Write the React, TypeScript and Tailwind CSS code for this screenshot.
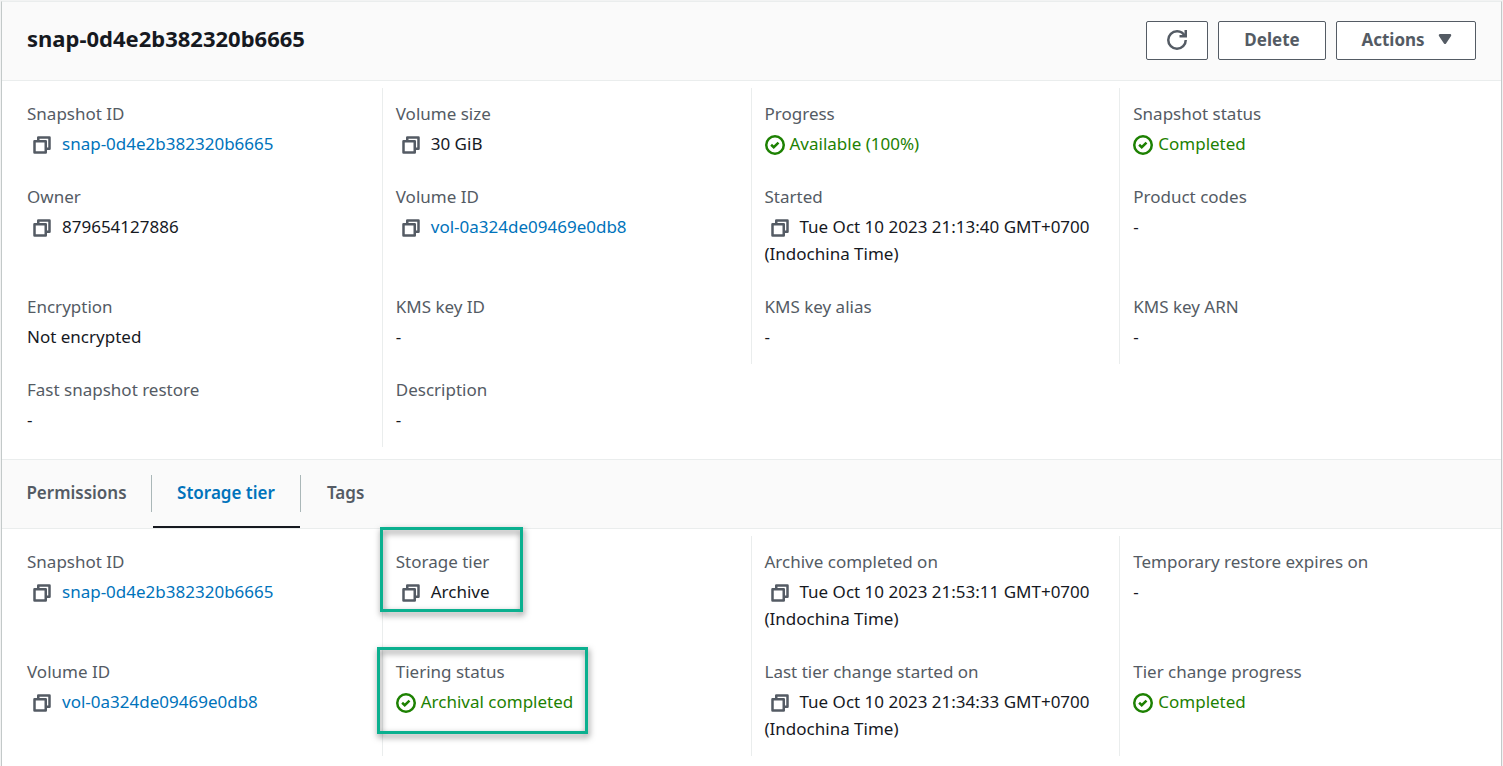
import React from "react";

type Kind = "text" | "link" | "status";

interface Field {
  label: string;
  value?: string;
  kind?: Kind;
  copy?: boolean;
  mark?: string;
}

const details: Field[] = [
  { label: "Snapshot ID", value: "snap-0d4e2b382320b6665", kind: "link", copy: true },
  { label: "Volume size", value: "30 GiB", copy: true },
  { label: "Progress", value: "Available (100%)", kind: "status" },
  { label: "Snapshot status", value: "Completed", kind: "status" },
  { label: "Owner", value: "879654127886", copy: true },
  { label: "Volume ID", value: "vol-0a324de09469e0db8", kind: "link", copy: true },
  { label: "Started", value: "Tue Oct 10 2023 21:13:40 GMT+0700 (Indochina Time)", copy: true },
  { label: "Product codes" },
  { label: "Encryption", value: "Not encrypted" },
  { label: "KMS key ID" },
  { label: "KMS key alias" },
  { label: "KMS key ARN" },
  { label: "Fast snapshot restore" },
  { label: "Description" },
];

const tierDetails: Field[] = [
  { label: "Snapshot ID", value: "snap-0d4e2b382320b6665", kind: "link", copy: true },
  { label: "Storage tier", value: "Archive", copy: true, mark: "-left-[3px] -top-[9px] h-[85px] w-[143px]" },
  { label: "Archive completed on", value: "Tue Oct 10 2023 21:53:11 GMT+0700 (Indochina Time)", copy: true },
  { label: "Temporary restore expires on" },
  { label: "Volume ID", value: "vol-0a324de09469e0db8", kind: "link", copy: true },
  { label: "Tiering status", value: "Archival completed", kind: "status", mark: "-left-[6px] top-[1px] h-[87px] w-[211px]" },
  { label: "Last tier change started on", value: "Tue Oct 10 2023 21:34:33 GMT+0700 (Indochina Time)", copy: true },
  { label: "Tier change progress", value: "Completed", kind: "status" },
];

function CopyIcon() {
  return (
    <svg viewBox="0 0 16 16" className="size-5" fill="none" stroke="currentColor" strokeWidth="2" strokeLinejoin="round">
      <path d="M2 5h9v9H2z" />
      <path d="M5 5V2h9v9h-3" />
    </svg>
  );
}

function CheckIcon() {
  return (
    <svg viewBox="0 0 16 16" className="mt-[2px] size-5 shrink-0" fill="none" stroke="currentColor" strokeWidth="2">
      <circle cx="8" cy="8" r="7" />
      <path d="m4.9 7.8 2.1 2 3.8-3.7" />
    </svg>
  );
}

function RefreshIcon() {
  return (
    <svg viewBox="0 0 16 16" className="size-5" fill="none" stroke="currentColor" strokeWidth="2">
      <path d="M10 5h5V0" />
      <path d="M15 8a7 7 0 1 1-7-7 6.87 6.87 0 0 1 6.3 4" />
    </svg>
  );
}

function FieldValue({ label, value, kind = "text", copy }: Field) {
  if (kind === "status") {
    return (
      <span className="flex items-center gap-[5px] text-[#1d8102]">
        <CheckIcon />
        {value}
      </span>
    );
  }
  return (
    <>
      {copy && (
        <button type="button" aria-label={`Copy ${label}`} className="inline-flex h-[27px] w-[35px] items-center pl-[5px] pt-[2px] align-top text-[#545b64]">
          <CopyIcon />
        </button>
      )}
      {kind === "link" ? (
        <a href="#" className="text-[#0073bb]">{value}</a>
      ) : (
        value ?? "-"
      )}
    </>
  );
}

function FieldGrid({ fields }: { fields: Field[] }) {
  return (
    <dl className="grid grid-cols-4 pt-[7px] pr-[13px] pb-3 pl-[11px]">
      {fields.map((field, i) => (
        <div
          key={field.label}
          className={`relative border-l pt-3 pr-4 pb-[14px] pl-[13px] ${i % 4 === 0 ? "border-transparent" : "border-[#eaeded]"}`}
        >
          <dt className="text-[#545b64]">{field.label}</dt>
          <dd className="mt-[3px]">
            <FieldValue {...field} />
          </dd>
          {field.mark && (
            <div className={`pointer-events-none absolute z-10 border-3 border-[#0bb08f] drop-shadow-[1px_3px_3px_rgba(0,0,0,0.5)] ${field.mark}`} />
          )}
        </div>
      ))}
    </dl>
  );
}

const buttonClass = "flex h-[39px] items-center justify-center rounded-xs border border-[#545b64] bg-white font-bold text-[#545b64]";

export default function App() {
  return (
    <div className="min-h-screen overflow-hidden bg-[#f2f3f3] px-[1px] pt-[1px] font-['Noto_Sans','Open_Sans',sans-serif] text-[17px] leading-[27px] text-[#16191f]">
      <main className="min-h-screen border-x border-t border-x-[#c3c9c9] border-t-[#eaeded] bg-white">
        <header className="flex h-[79px] items-center justify-between border-b border-[#eaeded] bg-[#fafafa] px-[25px] pb-[2px]">
          <h1 className="pb-1 text-[22px] font-bold">snap-0d4e2b382320b6665</h1>
          <div className="flex gap-[10px]">
            <button type="button" aria-label="Refresh" className={`${buttonClass} w-[62px]`}>
              <RefreshIcon />
            </button>
            <button type="button" className={`${buttonClass} w-[108px] pb-[2px]`}>Delete</button>
            <button type="button" className={`${buttonClass} w-[140px] gap-[10px] pb-[2px] pl-1`}>
              Actions
              <svg viewBox="0 0 16 16" className="size-5" fill="currentColor" stroke="currentColor" strokeWidth="2" strokeLinejoin="round">
                <path d="M4 5h8l-4 6z" />
              </svg>
            </button>
          </div>
        </header>

        <FieldGrid fields={details} />

        <div role="tablist" className="flex h-[70px] items-center border-y border-[#eaeded] bg-[#fafafa] pb-[2px] font-semibold text-[#545b64]">
          <button type="button" role="tab" aria-selected="false" className="h-[37px] w-[150px] border-r border-[#aab7b8] pb-[2px]">
            Permissions
          </button>
          <button type="button" role="tab" aria-selected="true" className="relative h-[37px] w-[149px] border-r border-[#aab7b8] pb-[2px] text-[#0073bb]">
            Storage tier
            <span className="absolute inset-x-0 -bottom-4 ml-[1px] h-[2px] bg-[#16191f]" />
          </button>
          <button type="button" role="tab" aria-selected="false" className="h-[37px] px-[26px] pb-[2px]">Tags</button>
        </div>

        <FieldGrid fields={tierDetails} />
      </main>
    </div>
  );
}
